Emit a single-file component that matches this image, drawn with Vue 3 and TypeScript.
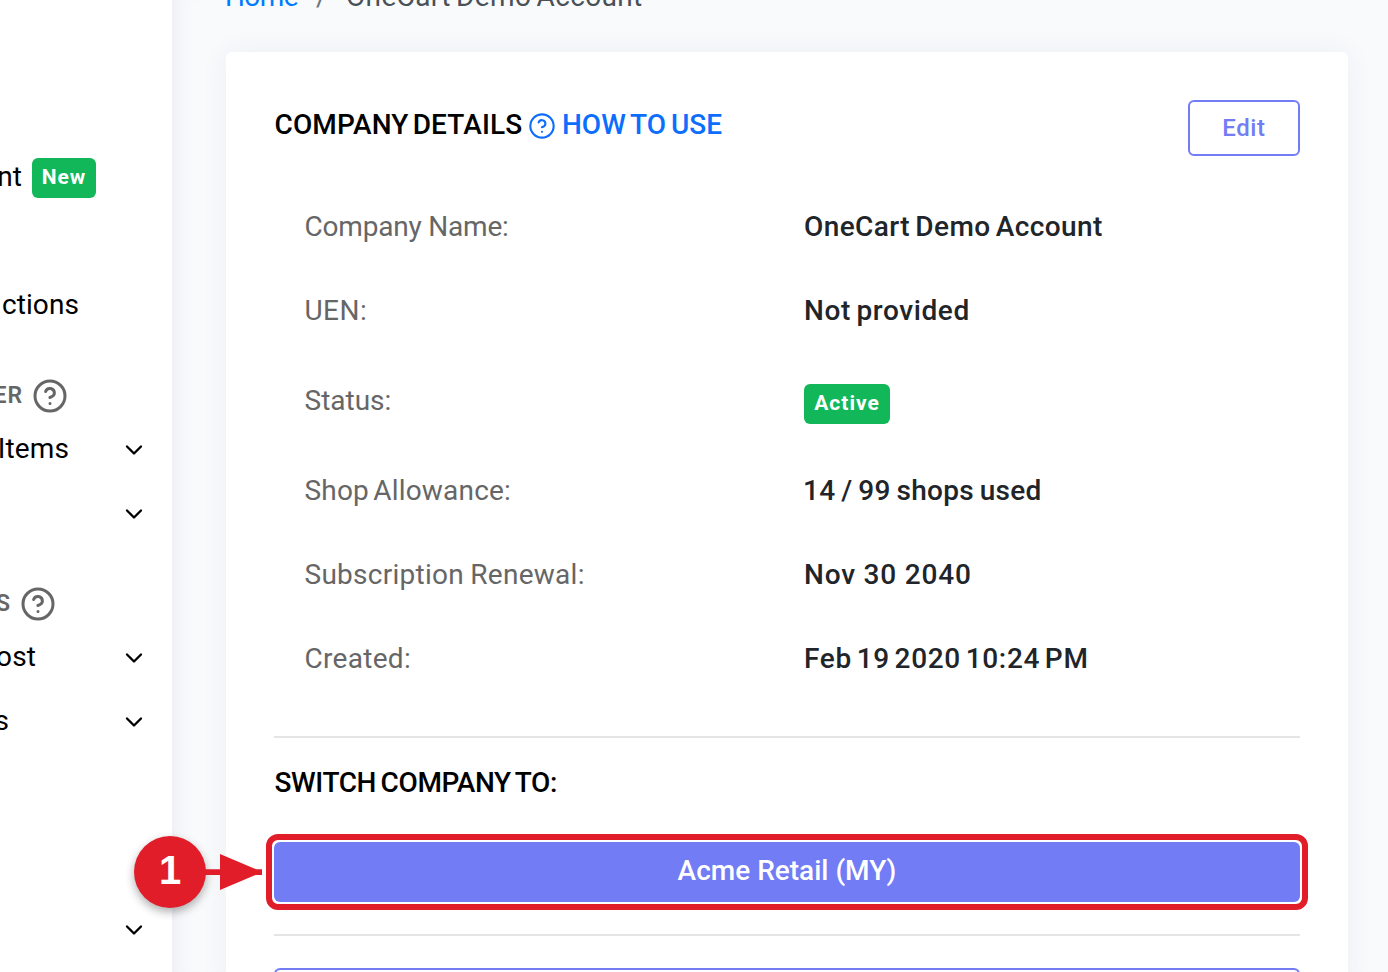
<script setup lang="ts">
interface SideRow { kind: 'item' | 'heading' | 'blank' | 'gap'; text: string; end: number; badge?: string; chevron?: boolean }
interface Detail { key: string; label: string; value: string; badge?: boolean }

const sideRows: SideRow[] = [
  { kind: 'item', text: 'nt', end: 22, badge: 'New' },
  { kind: 'blank', text: '', end: 0 },
  { kind: 'item', text: 'ctions', end: 79 },
  { kind: 'heading', text: 'ER', end: 23 },
  { kind: 'item', text: 'Items', end: 69, chevron: true },
  { kind: 'item', text: '', end: 0, chevron: true },
  { kind: 'heading', text: 'S', end: 11 },
  { kind: 'item', text: 'ost', end: 36, chevron: true },
  { kind: 'item', text: 's', end: 9, chevron: true },
  { kind: 'gap', text: '', end: 0 },
  { kind: 'item', text: '', end: 0, chevron: true },
]

const details: Detail[] = [
  { key: 'name', label: 'Company Name:', value: 'OneCart Demo Account' },
  { key: 'uen', label: 'UEN:', value: 'Not provided' },
  { key: 'status', label: 'Status:', value: 'Active', badge: true },
  { key: 'shops', label: 'Shop Allowance:', value: '14 / 99 shops used' },
  { key: 'renewal', label: 'Subscription Renewal:', value: 'Nov 30 2040' },
  { key: 'created', label: 'Created:', value: 'Feb 19 2020 10:24 PM' },
]
</script>

<template>
  <div class="page">
    <aside class="sidebar">
      <div v-for="(row, i) in sideRows" :key="i" class="side-row" :class="row.kind">
        <span class="side-text" :style="{ width: row.end + 'px' }"><span>{{ row.text }}</span></span>
        <span v-if="row.badge" class="badge side-badge">{{ row.badge }}</span>
        <svg v-if="row.kind === 'heading'" class="help" viewBox="0 0 24 24">
          <circle cx="12" cy="12" r="10" />
          <path d="M9.09 9a3 3 0 0 1 5.83 1c0 2-3 3-3 3M12 17h.01" />
        </svg>
        <svg v-if="row.chevron" class="chevron" viewBox="0 0 24 24"><path d="M6 9l6 6 6-6" /></svg>
      </div>
    </aside>

    <main class="main">
      <nav class="crumbs">
        <a class="home">Home</a><span class="slash">/</span><span class="here">OneCart Demo Account</span>
      </nav>
      <section class="card">
        <header class="card-head">
          <h1 class="title">COMPANY DETAILS</h1>
          <svg class="how-icon" viewBox="0 0 24 24">
            <circle cx="12" cy="12" r="10" />
            <path d="M9.09 9a3 3 0 0 1 5.83 1c0 2-3 3-3 3M12 17h.01" />
          </svg>
          <a class="how">HOW TO USE</a>
          <button class="edit">Edit</button>
        </header>
        <dl class="details">
          <div v-for="d in details" :key="d.key" class="detail" :class="d.key">
            <dt>{{ d.label }}</dt>
            <dd><span :class="{ badge: d.badge }">{{ d.value }}</span></dd>
          </div>
        </dl>
        <hr class="rule" />
        <h2 class="switch">SWITCH COMPANY TO:</h2>
        <div class="company">
          <button class="acme">Acme Retail (MY)</button>
          <div class="highlight"></div>
          <div class="marker">
            <div class="number">1</div>
            <svg class="arrow" viewBox="0 0 58 36"><path d="M0 15.2H58V21H0zM16 0L54 16V20L16 36z" /></svg>
          </div>
        </div>
        <hr class="rule" />
        <button class="next"></button>
      </section>
    </main>
  </div>
</template>

<style>
body { margin: 0; overflow: hidden; }
</style>

<style scoped>
.page { display: flex; width: 1388px; height: 972px; overflow: hidden; background: #f8fafc; font-family: Roboto, "Liberation Sans", sans-serif; font-size: 28px; color: #212529; }
.sidebar { flex: none; box-sizing: border-box; width: 172px; height: 972px; padding-top: 145px; overflow: hidden; background: #fff; color: #000; }
.side-row { display: flex; align-items: center; height: 64px; }
.side-row.gap { height: 144px; }
.side-row.heading { height: 80px; color: #666; font-size: 23px; font-weight: 600; }
.side-text { flex: none; display: flex; justify-content: flex-end; margin-top: -2px; white-space: nowrap; letter-spacing: 0.1px; }
.heading .side-text { margin-top: 37px; letter-spacing: 1px; }
.badge { display: inline-flex; box-sizing: border-box; align-items: center; justify-content: center; height: 40px; padding-bottom: 2px; border-radius: 6px; background: #12b759; color: #fff; font-size: 21px; font-weight: 700; letter-spacing: 1px; line-height: 1; }
.side-badge { width: 64px; margin-left: 10px; margin-top: 2px; }
.help { width: 36px; height: 36px; margin: 38px 0 0 9px; }
.help, .chevron, .how-icon { flex: none; fill: none; stroke: currentColor; stroke-width: 2; stroke-linecap: round; stroke-linejoin: round; }
.chevron { width: 28px; height: 28px; margin: 2px 24px 0 auto; }
.main { flex: none; box-sizing: border-box; width: 1216px; height: 972px; padding: 0 40px 0 54px; box-shadow: inset 18px 0 20px -14px rgba(45, 50, 70, .06); }
.crumbs { display: flex; height: 52px; line-height: 32px; white-space: nowrap; }
.crumbs > * { height: 32px; margin-top: -19px; }
.home { width: 75px; margin-left: -1px; color: #007bff; letter-spacing: -.6px; }
.slash { margin-left: 16px; width: 30px; color: #6c757d; }
.here { color: #495057; letter-spacing: .35px; word-spacing: -2px; }
.card { box-sizing: border-box; height: 940px; padding: 48px; border-radius: 6px; background: #fff; box-shadow: 0 0 28px rgba(45, 50, 90, .06); }
.card-head { display: flex; height: 85px; color: #000; }
.title { box-sizing: border-box; width: 254px; margin: 8px 0 0; padding-left: .5px; font-size: 28px; line-height: 34px; font-weight: 500; letter-spacing: .15px; word-spacing: -3px; white-space: nowrap; }
.how-icon { width: 28px; height: 28px; margin: 12px 6px 0 0; color: #0d6efd; stroke-width: 1.8; }
.how { margin-top: 8px; color: #0d6efd; font-weight: 500; line-height: 34px; word-spacing: -2px; white-space: nowrap; }
.edit { box-sizing: border-box; width: 112px; height: 56px; margin-left: auto; padding: 0; border: 2px solid #727cf5; border-radius: 6px; background: #fff; color: #727cf5; font: 500 24px Roboto, sans-serif; letter-spacing: .6px; }
.details { margin: 0; }
.detail { display: flex; align-items: center; height: 84px; line-height: 32px; white-space: nowrap; }
.detail.status { height: 96px; }
dt { box-sizing: border-box; width: 500px; padding-left: 30.5px; color: #666; }
dd { margin: 0 0 0 30px; font-weight: 500; letter-spacing: .7px; }
.name dt { letter-spacing: -.2px; }
.name dd { letter-spacing: .4px; word-spacing: -2px; }
.uen dt { letter-spacing: .45px; }
.uen dd { letter-spacing: .6px; word-spacing: -2px; }
.shops dt { letter-spacing: .2px; word-spacing: -3px; }
.shops dd { margin-left: 29px; letter-spacing: .25px; word-spacing: -1.3px; }
.renewal dt { letter-spacing: .27px; word-spacing: -1px; }
.renewal dd { letter-spacing: .8px; }
.created dt { letter-spacing: .3px; }
.created dd { word-spacing: -3px; }
.status dd { display: flex; margin-top: 6px; }
.status .badge { width: 86px; }
.rule { height: 2px; margin: 35px 0 0; border: 0; background: #e5e5e5; }
.switch { margin: 28px 0 42px; height: 34px; padding-left: .5px; font-size: 28px; line-height: 34px; font-weight: 500; color: #000; letter-spacing: -.4px; word-spacing: -2px; white-space: nowrap; }
.company { position: relative; height: 60px; margin-bottom: -3px; }
.acme { display: block; width: 100%; height: 60px; padding: 0 0 3px; border: 0; border-radius: 6px; background: #727cf5; color: #fff; font: 500 28px Roboto, sans-serif; }
.highlight { position: absolute; inset: -8px; border: 6px solid #e11d29; border-radius: 12px; }
.marker { position: absolute; left: -140px; top: -6px; display: flex; align-items: center; }
.number { width: 72px; height: 72px; border-radius: 50%; background: #e11d29; color: #fff; text-align: center; font: 700 40px/68px "Liberation Sans", Arial, sans-serif; box-shadow: 0 4px 10px rgba(0, 0, 0, .32); }
.arrow { width: 58px; height: 36px; margin-left: -2px; fill: #e11d29; }
.next { display: block; box-sizing: border-box; width: 100%; height: 64px; margin-top: 32px; border: 2px solid #727cf5; border-radius: 6px; background: #fff; }
</style>
